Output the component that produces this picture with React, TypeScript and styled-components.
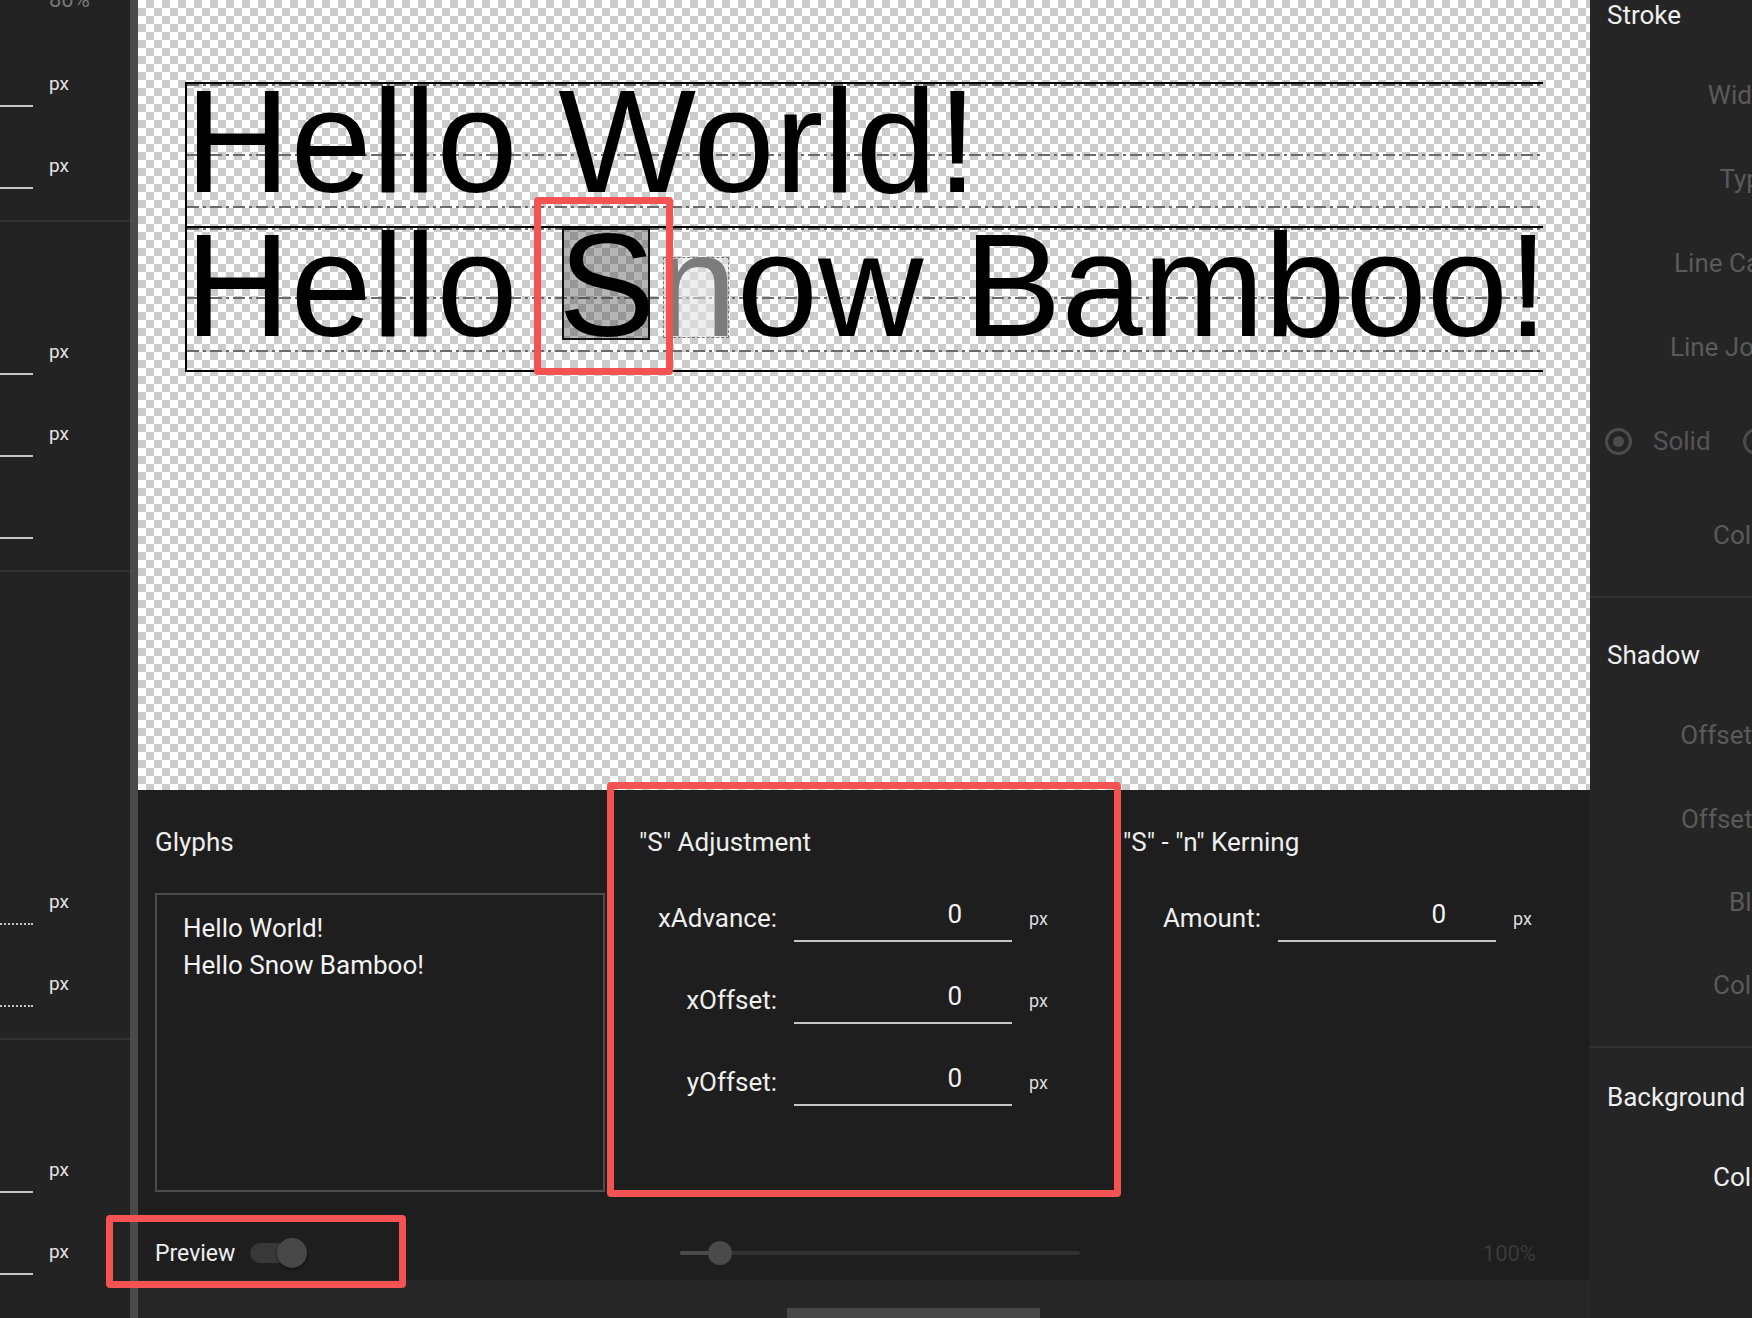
import React from "react";
import styled, { createGlobalStyle } from "styled-components";

const Global = createGlobalStyle`
  html, body { margin: 0; padding: 0; background: #252525; overflow: hidden; }
  * { box-sizing: border-box; }
`;

const Page = styled.div`
  position: relative;
  display: flex;
  width: 1752px;
  height: 1318px;
  overflow: hidden;
  background: #252525;
  font-family: Roboto, "Liberation Sans", sans-serif;
  color: #eeeeee;
`;

/* ---------- left panel ---------- */
const LeftPanel = styled.div`
  width: 130px;
  flex-shrink: 0;
  background: #232323;
  overflow: hidden;
`;
const LeftInner = styled.div`
  margin-top: -44px;
`;
const LSection = styled.div<{ $pt: number; $last?: boolean }>`
  padding-top: ${(p) => p.$pt}px;
  padding-bottom: 14px;
  border-bottom: ${(p) => (p.$last ? "none" : "2px solid #333333")};
`;
const FieldRow = styled.div<{ $h?: number }>`
  display: flex;
  align-items: center;
  justify-content: flex-end;
  gap: 16px;
  height: ${(p) => p.$h ?? 82}px;
  padding-right: 61px;
`;
const LineInput = styled.div<{ $dotted?: boolean }>`
  flex-shrink: 0;
  width: 200px;
  height: 48px;
  border-bottom: 2px ${(p) => (p.$dotted ? "dotted" : "solid")} #c6c6c6;
`;
const SliderTrack = styled.div`
  flex-shrink: 0;
  width: 200px;
  height: 2px;
  background: #555555;
`;
const Unit = styled.span<{ $dim?: boolean }>`
  flex-shrink: 0;
  width: 20px;
  white-space: nowrap;
  font-size: ${(p) => (p.$dim ? 22 : 19)}px;
  color: ${(p) => (p.$dim ? "#777777" : "#e2e2e2")};
`;

const Splitter = styled.div`
  width: 8px;
  flex-shrink: 0;
  background: #4a4a4a;
`;

/* ---------- center ---------- */
const Center = styled.div`
  width: 1452px;
  flex-shrink: 0;
  display: flex;
  flex-direction: column;
`;
const Canvas = styled.div`
  height: 790px;
  flex-shrink: 0;
  padding: 82px 0 0 47px;
  background: repeating-conic-gradient(#cccccc 0 25%, #ffffff 0 50%) 0 0 / 16px 16px;
  overflow: hidden;
`;
const GlyphBox = styled.div`
  width: 1358px;
  border-left: 2px solid #000;
  border-bottom: 2px solid #000;
`;
const GlyphLine = styled.div`
  position: relative;
  height: 144px;
  border-top: 2px solid #000;
`;
const Guide = styled.div<{ $top: number }>`
  position: absolute;
  left: 0;
  right: 0;
  top: ${(p) => p.$top}px;
  height: 2px;
  background: repeating-linear-gradient(
    90deg,
    #6a6a6a 0 12px,
    transparent 12px 16px,
    #6a6a6a 16px 19px,
    transparent 19px 23px
  );
`;
const GlyphText = styled.div`
  position: relative;
  z-index: 1;
  margin-left: -2px;
  font-family: "Liberation Sans", Arial, sans-serif;
  font-size: 146px;
  line-height: 116px;
  color: #000;
  white-space: nowrap;
`;
const SelBox = styled.div`
  position: absolute;
  z-index: 0;
  left: 375px;
  top: 0;
  width: 88px;
  height: 112px;
  border: 2px solid #111;
  background: rgba(70, 70, 70, 0.4);
`;
const PairBox = styled.div`
  position: absolute;
  z-index: 2;
  left: 476px;
  top: 29px;
  width: 66px;
  height: 81px;
  border: 1px dashed #777;
  background: rgba(225, 225, 225, 0.55);
`;

const BottomPanel = styled.div`
  height: 490px;
  flex-shrink: 0;
  background: #1e1e1e;
  display: flex;
  flex-direction: column;
`;
const Columns = styled.div`
  display: grid;
  grid-template-columns: repeat(3, 484px);
  padding-top: 37px;
`;
const Column = styled.div`
  padding: 0 17px;
`;
const SectionTitle = styled.div`
  font-size: 26px;
  line-height: 30px;
  height: 30px;
  margin-bottom: 36px;
  color: #eeeeee;
  white-space: nowrap;
`;
const GlyphArea = styled.div`
  height: 299px;
  border: 2px solid #4b4b4b;
  padding: 15px 26px;
  font-size: 26px;
  line-height: 37px;
  color: #f2f2f2;
  white-space: pre-line;
`;
const FieldList = styled.div`
  display: flex;
  flex-direction: column;
  gap: 34px;
  padding-top: 1px;
`;
const Field = styled.div`
  display: flex;
  align-items: center;
  height: 48px;
`;
const FieldLabel = styled.div`
  width: 138px;
  flex-shrink: 0;
  text-align: right;
  font-size: 26px;
  color: #eeeeee;
`;
const ValueInput = styled.div`
  margin-left: 17px;
  width: 218px;
  height: 48px;
  flex-shrink: 0;
  border-bottom: 2px solid #c4c4c4;
  text-align: right;
  padding-right: 50px;
  font-size: 26px;
  line-height: 40px;
  color: #f2f2f2;
`;
const FieldUnit = styled.span`
  margin-left: 17px;
  font-size: 18px;
  color: #dddddd;
`;
const Footer = styled.div`
  margin-top: auto;
  height: 54px;
  display: grid;
  grid-template-columns: repeat(3, 484px);
  align-items: center;
`;
const FooterLeft = styled.div`
  display: flex;
  align-items: center;
  gap: 15px;
  padding-left: 17px;
`;
const PreviewLabel = styled.span`
  font-size: 23px;
  color: #eeeeee;
`;
const SwitchTrack = styled.div`
  position: relative;
  width: 49px;
  height: 20px;
  border-radius: 10px;
  background: #383838;
`;
const SwitchThumb = styled.div`
  position: absolute;
  left: 27px;
  top: -5px;
  width: 30px;
  height: 30px;
  border-radius: 50%;
  background: #474747;
  box-shadow: 0 2px 3px rgba(0, 0, 0, 0.45);
`;
const SliderCell = styled.div`
  padding-left: 58px;
`;
const Slider = styled.div`
  position: relative;
  width: 400px;
  height: 4px;
  border-radius: 2px;
  background: #313131;
`;
const SliderFill = styled.div`
  width: 40px;
  height: 4px;
  border-radius: 2px;
  background: #4a4a4a;
`;
const SliderThumb = styled.div`
  position: absolute;
  left: 28px;
  top: -10px;
  width: 24px;
  height: 24px;
  border-radius: 50%;
  background: #4a4a4a;
`;
const Percent = styled.div`
  text-align: right;
  padding-right: 54px;
  font-size: 22px;
  color: #3a3a3a;
`;
const ScrollStrip = styled.div`
  flex: 1;
  background: #262626;
  padding: 28px 0 0 649px;
`;
const ScrollThumb = styled.div`
  width: 253px;
  height: 10px;
  background: #474747;
`;

/* ---------- right panel ---------- */
const RightPanel = styled.div`
  width: 162px;
  flex-shrink: 0;
  background: #252525;
  overflow: hidden;
`;
const RightInner = styled.div`
  width: 420px;
  margin-top: -42px;
`;
const RSection = styled.div<{ $pt: number; $last?: boolean }>`
  padding-top: ${(p) => p.$pt}px;
  padding-bottom: 19px;
  border-bottom: ${(p) => (p.$last ? "none" : "2px solid #333333")};
`;
const RTitle = styled.div`
  padding-left: 17px;
  font-size: 26px;
  line-height: 30px;
  height: 30px;
  margin-bottom: 23px;
  color: #eeeeee;
  white-space: nowrap;
`;
const RRow = styled.div<{ $h?: number }>`
  display: flex;
  align-items: center;
  height: ${(p) => p.$h ?? 84}px;
`;
const RLabel = styled.div<{ $dim?: boolean }>`
  width: 191px;
  flex-shrink: 0;
  text-align: right;
  white-space: nowrap;
  font-size: 26px;
  color: ${(p) => (p.$dim ? "#5a5a5a" : "#eeeeee")};
`;
const RadioGroup = styled.div`
  display: flex;
  align-items: center;
  padding-left: 15px;
`;
const Radio = styled.div<{ $checked?: boolean }>`
  width: 27px;
  height: 27px;
  flex-shrink: 0;
  border-radius: 50%;
  border: 3px solid #4c4c4c;
  display: flex;
  align-items: center;
  justify-content: center;
  &::after {
    content: "";
    width: 11px;
    height: 11px;
    border-radius: 50%;
    background: ${(p) => (p.$checked ? "#4c4c4c" : "transparent")};
  }
`;
const RadioText = styled.span`
  margin: 0 32px 0 21px;
  font-size: 26px;
  color: #555555;
  white-space: nowrap;
`;

/* ---------- annotations ---------- */
const Annotation = styled.div<{ $x: number; $y: number; $w: number; $h: number }>`
  position: absolute;
  left: ${(p) => p.$x}px;
  top: ${(p) => p.$y}px;
  width: ${(p) => p.$w}px;
  height: ${(p) => p.$h}px;
  border: 7px solid #f45353;
  border-radius: 4px;
  pointer-events: none;
  z-index: 10;
`;

const PxRow = ({ dotted, unit = "px" }: { dotted?: boolean; unit?: string }) => (
  <FieldRow>
    <LineInput $dotted={dotted} />
    <Unit>{unit}</Unit>
  </FieldRow>
);

const ValueField = ({ label }: { label: string }) => (
  <Field>
    <FieldLabel>{label}</FieldLabel>
    <ValueInput>0</ValueInput>
    <FieldUnit>px</FieldUnit>
  </Field>
);

export default function App() {
  return (
    <Page>
      <Global />
      <LeftPanel>
        <LeftInner>
          <LSection $pt={0}>
            <FieldRow $h={86}>
              <SliderTrack />
              <Unit $dim>80%</Unit>
            </FieldRow>
            <PxRow />
            <PxRow />
          </LSection>
          <LSection $pt={88}>
            <PxRow />
            <PxRow />
            <PxRow unit="" />
          </LSection>
          <LSection $pt={288}>
            <PxRow dotted />
            <PxRow dotted />
          </LSection>
          <LSection $pt={88} $last>
            <PxRow />
            <PxRow />
          </LSection>
        </LeftInner>
      </LeftPanel>

      <Splitter />

      <Center>
        <Canvas>
          <GlyphBox>
            <GlyphLine>
              <Guide $top={0} />
              <Guide $top={70} />
              <Guide $top={122} />
              <GlyphText>Hello World!</GlyphText>
            </GlyphLine>
            <GlyphLine>
              <Guide $top={0} />
              <Guide $top={69} />
              <Guide $top={122} />
              <SelBox />
              <GlyphText>Hello Snow Bamboo!</GlyphText>
              <PairBox />
            </GlyphLine>
          </GlyphBox>
        </Canvas>

        <BottomPanel>
          <Columns>
            <Column>
              <SectionTitle>Glyphs</SectionTitle>
              <GlyphArea>{"Hello World!\nHello Snow Bamboo!"}</GlyphArea>
            </Column>
            <Column>
              <SectionTitle>"S" Adjustment</SectionTitle>
              <FieldList>
                <ValueField label="xAdvance:" />
                <ValueField label="xOffset:" />
                <ValueField label="yOffset:" />
              </FieldList>
            </Column>
            <Column>
              <SectionTitle>"S" - "n" Kerning</SectionTitle>
              <FieldList>
                <ValueField label="Amount:" />
              </FieldList>
            </Column>
          </Columns>
          <Footer>
            <FooterLeft>
              <PreviewLabel>Preview</PreviewLabel>
              <SwitchTrack>
                <SwitchThumb />
              </SwitchTrack>
            </FooterLeft>
            <SliderCell>
              <Slider>
                <SliderFill />
                <SliderThumb />
              </Slider>
            </SliderCell>
            <Percent>100%</Percent>
          </Footer>
        </BottomPanel>
        <ScrollStrip>
          <ScrollThumb />
        </ScrollStrip>
      </Center>

      <RightPanel>
        <RightInner>
          <RSection $pt={42}>
            <RTitle>Stroke</RTitle>
            <RRow><RLabel $dim>Width:</RLabel></RRow>
            <RRow><RLabel $dim>Type:</RLabel></RRow>
            <RRow><RLabel $dim>Line Cap:</RLabel></RRow>
            <RRow><RLabel $dim>Line Join:</RLabel></RRow>
            <RRow $h={104}>
              <RadioGroup>
                <Radio $checked />
                <RadioText>Solid</RadioText>
                <Radio />
                <RadioText>Dashed</RadioText>
              </RadioGroup>
            </RRow>
            <RRow><RLabel $dim>Color:</RLabel></RRow>
          </RSection>
          <RSection $pt={42}>
            <RTitle>Shadow</RTitle>
            <RRow><RLabel $dim>Offset X:</RLabel></RRow>
            <RRow><RLabel $dim>Offset Y:</RLabel></RRow>
            <RRow $h={82}><RLabel $dim>Blur:</RLabel></RRow>
            <RRow><RLabel $dim>Color:</RLabel></RRow>
          </RSection>
          <RSection $pt={34} $last>
            <RTitle>Background</RTitle>
            <RRow><RLabel>Color:</RLabel></RRow>
          </RSection>
        </RightInner>
      </RightPanel>

      <Annotation $x={534} $y={197} $w={139} $h={178} />
      <Annotation $x={607} $y={782} $w={514} $h={415} />
      <Annotation $x={106} $y={1215} $w={300} $h={73} />
    </Page>
  );
}
